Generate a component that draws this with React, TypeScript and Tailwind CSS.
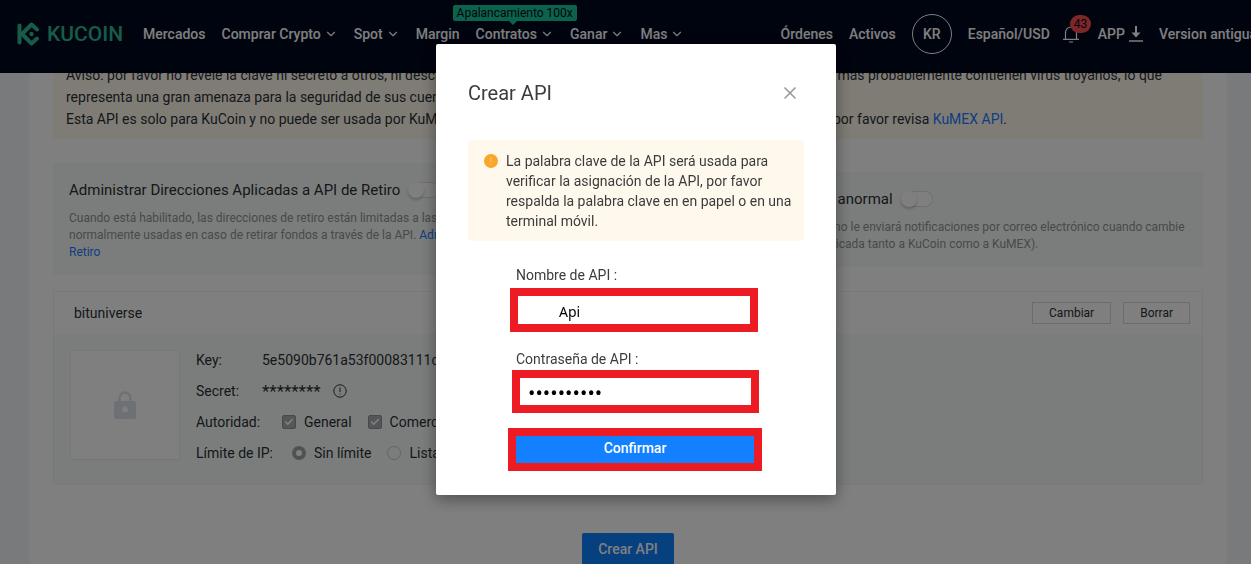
import React, { useState } from 'react';
import { Check, ChevronDown, X } from 'lucide-react';

const menu = [
  { label: 'Mercados' },
  { label: 'Comprar Crypto', dropdown: true },
  { label: 'Spot', dropdown: true },
  { label: 'Margin' },
  { label: 'Contratos', dropdown: true, tag: 'Apalancamiento 100x' },
  { label: 'Ganar', dropdown: true },
  { label: 'Mas', dropdown: true },
];

function Logo() {
  return (
    <a href="#" className="mr-5 flex shrink-0 items-center gap-2 text-[#2fb893]">
      <svg viewBox="0 0 22 24" className="h-6 w-[22px]" fill="none" stroke="currentColor" strokeWidth="4" strokeLinecap="round" strokeLinejoin="round">
        <path d="M2.500 3.500v17" />
        <path d="M20 7.500l-5.500-5L5 12l9.500 9.500 5.500-5" />
        <path d="M3 12h2" />
        <circle cx="14.500" cy="12" r="2.200" fill="currentColor" stroke="none" />
      </svg>
      <span className="text-[21px] leading-6 font-medium">KUCOIN</span>
    </a>
  );
}

function Header() {
  return (
    <header className="relative z-10 flex h-[73px] items-center overflow-hidden bg-[#01081e] pb-1.5 pl-[17px] text-sm font-medium text-white">
      <Logo />
      <nav className="flex shrink-0 items-center gap-4">
        {menu.map((item) => (
          <a key={item.label} href="#" className="relative flex items-center gap-[3px]">
            {item.label}
            {item.dropdown && <ChevronDown className="h-3.5 w-3.5" />}
            {item.tag && (
              <span className="absolute -top-[19px] -left-[23px] rounded-xs bg-[#18c797] px-1 text-xs leading-4 font-normal whitespace-nowrap text-[#01081e]">
                {item.tag}
                <span className="absolute top-4 left-14 border-x-4 border-t-4 border-x-transparent border-t-[#18c797]" />
              </span>
            )}
          </a>
        ))}
      </nav>
      <div className="-mr-1.5 flex flex-1 shrink-0 items-center justify-end gap-4 whitespace-nowrap">
        <a href="#">Órdenes</a>
        <a href="#">Activos</a>
        <a href="#" className="flex h-10 w-10 items-center justify-center rounded-full border border-white">KR</a>
        <a href="#">Español/USD</a>
        <button type="button" aria-label="Notificaciones" className="relative mr-0.5 -ml-1 h-[18px] w-[18px]">
          <svg viewBox="0 0 18 18" className="h-[18px] w-[18px]" fill="none" stroke="currentColor" strokeWidth="1.200">
            <path d="M1 14.400h16M3.500 14.400V7.500a5.500 5.500 0 0 1 11 0v6.900M7 17h4" />
          </svg>
          <span className="absolute -top-2.5 left-2 rounded-full bg-[#ff4f4f] px-1 text-xs leading-[18px] font-normal text-[#01081e]">43</span>
        </button>
        <a href="#" className="flex items-center gap-1">
          APP
          <svg viewBox="0 0 14 16" className="h-4 w-3.5" fill="none" stroke="currentColor" strokeWidth="2">
            <path d="M7 0v9" />
            <path d="M2.500 6.500h9l-4.500 5z" fill="currentColor" stroke="none" />
            <path d="M0 15h14" strokeWidth="1.500" />
          </svg>
        </a>
        <a href="#">Version antigua</a>
      </div>
    </header>
  );
}

function Toggle({ label }: { label: string }) {
  return (
    <button type="button" role="switch" aria-checked="false" aria-label={label} className="h-4 w-8 rounded-full border border-[#dcdfe3] bg-white">
      <span className="-mt-px -ml-px block h-4 w-4 rounded-full bg-white shadow-[0_2px_3px_rgba(0,0,0,0.2)]" />
    </button>
  );
}

function Notice() {
  return (
    <div className="bg-[#fff8ed] px-[13px] pt-[11px] pb-[9px] text-sm leading-[22px] whitespace-nowrap">
      <div className="flex justify-between pr-7">
        <span>Aviso: por favor no revele la clave ni secreto a otros, ni descargue</span>
        <span>mas probablemente contienen virus troyanos, lo que</span>
      </div>
      <div>representa una gran amenaza para la seguridad de sus cuentas.</div>
      <div className="flex justify-between pr-[183px]">
        <span>Esta API es solo para KuCoin y no puede ser usada por KuMEX</span>
        <span>
          por favor revisa <a href="#" className="text-[#1a7cff]">KuMEX API</a>.
        </span>
      </div>
    </div>
  );
}

function Settings() {
  return (
    <div className="mt-6 grid grid-cols-2 items-center gap-4 whitespace-nowrap">
      <section className="bg-[#f6fbf9] px-4 pt-[15px] pb-3.5">
        <div className="flex items-center gap-2">
          <h2 className="text-[15px] leading-6">Administrar Direcciones Aplicadas a API de Retiro</h2>
          <Toggle label="Administrar direcciones" />
        </div>
        <p className="mt-2 text-xs leading-[17px] text-[#8f9296]">
          Cuando está habilitado, las direcciones de retiro están limitadas a las
          <br />
          normalmente usadas en caso de retirar fondos a través de la API.{' '}
          <a href="#" className="text-[#1a7cff]">
            Administrar
            <br />
            Retiro
          </a>
        </p>
      </section>
      <section className="bg-[#f6fbf9] px-4 pt-[15px] pb-3.5">
        <div className="flex items-center gap-2">
          <h2 className="text-[15px] leading-6">Restricción de inicio sesión anormal</h2>
          <Toggle label="Inicio anormal" />
        </div>
        <p className="mt-2 text-xs leading-[17px] text-[#8f9296]">
          Cuando está habilitado KuCoin ya no le enviará notificaciones por correo electrónico cuando cambie
          <br />
          su dirección de IP (una función aplicada tanto a KuCoin como a KuMEX).
        </p>
      </section>
    </div>
  );
}

function Permission({ label }: { label: string }) {
  return (
    <label className="flex items-center gap-2">
      <span className="relative h-3.5 w-3.5">
        <input type="checkbox" defaultChecked className="block h-3.5 w-3.5 appearance-none rounded-xs border border-[#8f9296] bg-[#a9acaf]" />
        <Check className="pointer-events-none absolute top-0.5 left-0.5 h-2.5 w-2.5 text-white" strokeWidth={4} />
      </span>
      {label}
    </label>
  );
}

function ApiCard() {
  return (
    <section className="mt-4 border border-[#f0f3f5] text-sm">
      <div className="flex h-[42px] items-center justify-between pr-3 pl-5">
        <h3>bituniverse</h3>
        <div className="flex gap-3 text-xs">
          <button type="button" className="h-[22px] border border-[#d5d9de] px-4">Cambiar</button>
          <button type="button" className="h-[22px] border border-[#d5d9de] px-4">Borrar</button>
        </div>
      </div>
      <div className="flex gap-4 bg-[#f6fbf9] px-4 pt-4 pb-6">
        <div className="flex h-[110px] w-[110px] items-center justify-center border border-[#eceff2] bg-white">
          <svg viewBox="0 0 22 28" className="h-7 w-[22px] text-[#dbe2ea]">
            <path d="M5.500 11V7a5.500 5.500 0 0 1 11 0v4" fill="none" stroke="currentColor" strokeWidth="2.400" />
            <path d="M2 10h18a2 2 0 0 1 2 2v14a2 2 0 0 1-2 2H2a2 2 0 0 1-2-2V12a2 2 0 0 1 2-2zm9 5.500a3 3 0 1 0 0 6 3 3 0 0 0 0-6z" fill="currentColor" fillRule="evenodd" />
          </svg>
        </div>
        <div className="-mb-1 flex flex-col gap-[11px] leading-5 whitespace-nowrap">
          <div className="flex"><span className="w-[66px]">Key:</span>5e5090b761a53f00083111c1</div>
          <div className="flex items-center">
            <span className="w-[66px]">Secret:</span>
            <span className="text-[17px] leading-5">********</span>
            <svg viewBox="0 0 14 14" className="ml-3 h-3.5 w-3.5" fill="none" stroke="currentColor">
              <circle cx="7" cy="7" r="6.200" />
              <path d="M7 3.500v4.500M7 9.500v1" />
            </svg>
          </div>
          <div className="flex items-center gap-4">
            <span className="w-[70px]">Autoridad:</span>
            <Permission label="General" />
            <Permission label="Comercio" />
          </div>
          <div className="flex items-center gap-4">
            <span className="w-20">Límite de IP:</span>
            <label className="flex items-center gap-2">
              <input type="radio" name="ip" defaultChecked className="h-3.5 w-3.5 appearance-none rounded-full border-4 border-[#a0a3a6] bg-white" />
              Sin límite
            </label>
            <label className="flex items-center gap-2">
              <input type="radio" name="ip" className="h-3.5 w-3.5 appearance-none rounded-full border border-[#c4c8cc]" />
              Lista
            </label>
          </div>
        </div>
      </div>
    </section>
  );
}

function CreateApiDialog() {
  const [name, setName] = useState('Api');
  const [password, setPassword] = useState('contrasena');

  return (
    <div className="fixed inset-0 z-20 flex items-start justify-center bg-black/50 pt-11 pl-[21px]">
      <div role="dialog" aria-label="Crear API" className="w-[400px] rounded-xs bg-white px-8 pt-[35px] pb-6 text-[#3c3c3c] shadow-[0_4px_16px_rgba(0,0,0,0.4)]">
        <div className="flex items-center justify-between pr-1">
          <h1 className="text-xl leading-7">Crear API</h1>
          <button type="button" aria-label="Cerrar" className="text-[#999999]">
            <X className="h-5 w-5" />
          </button>
        </div>
        <div className="mt-[33px] flex gap-2 rounded bg-[#fff8ed] px-4 pt-[11px] pb-2.5 text-sm leading-5">
          <svg viewBox="0 0 14 14" className="mt-[3px] h-3.5 w-3.5 shrink-0">
            <circle cx="7" cy="7" r="7" fill="#f9a72b" />
            <path d="M7 3.500v4.500M7 9.500v1" stroke="#fdd08b" />
          </svg>
          <p className="whitespace-nowrap">
            La palabra clave de la API será usada para
            <br />
            verificar la asignación de la API, por favor
            <br />
            respalda la palabra clave en en papel o en una
            <br />
            terminal móvil.
          </p>
        </div>
        <form className="mt-6 flex flex-col pr-[42px] pl-10 text-sm" onSubmit={(e) => e.preventDefault()}>
          <label htmlFor="api-name" className="pl-2 leading-5">Nombre de API :</label>
          <input
            id="api-name"
            value={name}
            onChange={(e) => setName(e.target.value)}
            className="mt-[3px] mr-1 ml-0.5 h-11 border-8 border-[#ed1c24] pt-0.5 pl-[41px] font-['Noto_Sans'] text-sm text-black outline-none"
          />
          <label htmlFor="api-password" className="mt-[17px] pl-2 leading-5">Contraseña de API :</label>
          <input
            id="api-password"
            type="password"
            value={password}
            onChange={(e) => setPassword(e.target.value)}
            className="mt-px mr-[3px] ml-1 h-[43px] border-8 border-[#ed1c24] pt-1 pl-2 text-[22px] text-black outline-none"
          />
          <button type="submit" className="mt-[15px] h-[43px] border-8 border-[#ed1c24] bg-[#1380ff] pb-1 font-medium text-white">
            Confirmar
          </button>
        </form>
      </div>
    </div>
  );
}

export default function App() {
  return (
    <div className="h-screen overflow-hidden bg-[#f3f5f9] font-['Roboto',sans-serif] text-[#2b2f33]">
      <Header />
      <main className="-mt-5 mr-6 ml-[29px] min-h-screen bg-white px-6">
        <Notice />
        <Settings />
        <ApiCard />
        <div className="mt-12 flex justify-center">
          <button type="button" className="h-8 rounded-xs bg-[#0d80ff] px-4 text-sm font-medium text-white">Crear API</button>
        </div>
      </main>
      <CreateApiDialog />
    </div>
  );
}
